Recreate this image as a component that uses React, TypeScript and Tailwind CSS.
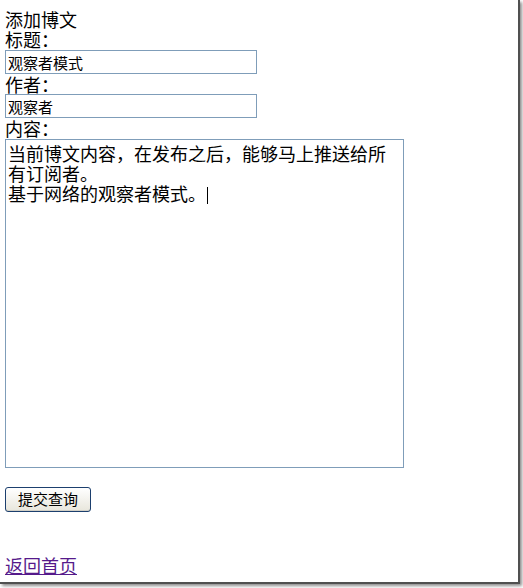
import React from "react";

export default function App() {
  const cjk = { fontFamily: '"Noto Sans CJK SC", "Liberation Sans", sans-serif' };
  return (
    <div className="w-[523px] h-[588px] bg-white relative overflow-hidden" style={cjk}>
      <div className="w-[520px] h-[584px] bg-white border-r-2 border-b-2 border-[#505050] shadow-[2px_2px_3px_rgba(0,0,0,0.45)] flex flex-col pl-[5px] pt-[9px] text-black">
        <div className="text-[18px] leading-[20px]">添加博文</div>
        <div className="text-[18px] leading-[20px]">标题：</div>
        <input
          readOnly
          value="观察者模式"
          className="mt-[1px] w-[252px] h-[24px] border border-[#7f9db9] px-[2px] text-[15px] leading-[18px] outline-none"
          style={cjk}
        />
        <div className="text-[18px] leading-[20px]">作者：</div>
        <input
          readOnly
          value="观察者"
          className="w-[252px] h-[24px] border border-[#7f9db9] px-[2px] text-[15px] leading-[18px] outline-none"
          style={cjk}
        />
        <div className="text-[18px] leading-[20px]">内容：</div>
        <div className="mt-[1px] w-[399px] h-[329px] border border-[#7f9db9] px-[2px] pt-[3px] text-[18px] leading-[20px] whitespace-pre-wrap break-all">
          当前博文内容，在发布之后，能够马上推送给所有订阅者。{"\n"}基于网络的观察者模式。
          <span className="inline-block w-px h-[17px] bg-black align-[-3px] ml-[1px]" />
        </div>
        <div className="mt-[18px]">
          <button
            className="w-[86px] h-[25px] rounded-[3px] border border-[#1c3f6e] bg-gradient-to-b from-white to-[#e8e6dc] text-[15px] leading-[18px] text-black shadow-[inset_0_-1px_0_rgba(0,0,0,0.1)]"
            style={cjk}
          >
            提交查询
          </button>
        </div>
        <div className="mt-[42px]">
          <a href="#" className="text-[18px] leading-[20px] text-[#551a8b] underline">
            返回首页
          </a>
        </div>
      </div>
    </div>
  );
}
